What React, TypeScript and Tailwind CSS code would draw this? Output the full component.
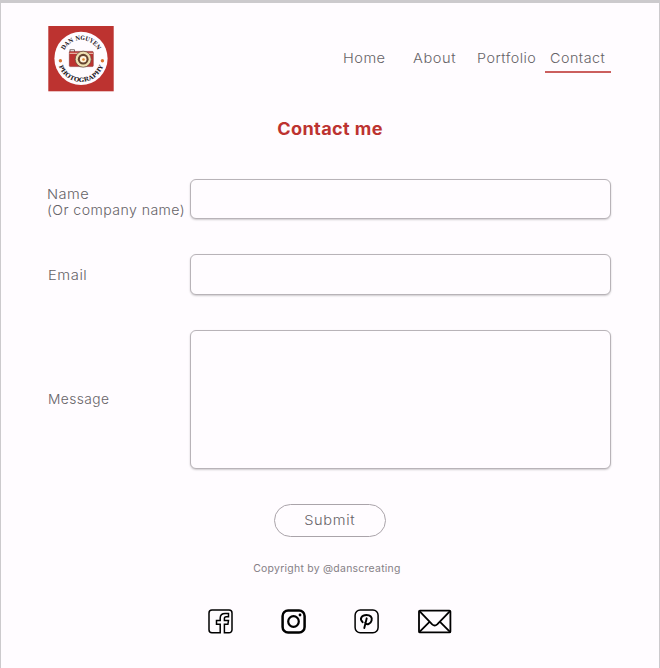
import type { ReactNode } from "react";

const navItems = [
  { label: "Home", box: "w-[56px] pl-[7px]", text: "scale-x-[1.075] tracking-[0.42px]" },
  { label: "About", box: "ml-[14px] w-[64px] pl-[7px]", text: "scale-x-[1.075] tracking-[0.55px]" },
  { label: "Portfolio", box: "w-[75px] pl-[7px]", text: "scale-x-[1.055] tracking-[0.45px]" },
  { label: "Contact", box: "w-[66px] pl-[5px] border-b-2 border-[#cb5f5e]", text: "scale-x-[1.055] tracking-[0.45px]" },
];

function Logo() {
  return (
    <svg className="block h-[66px] w-[66px]" viewBox="0 0 66 66" role="img">
      <defs>
        <path id="arc-top" d="M14.4 32.5 A18.6 18.6 0 0 1 51.6 32.5" />
        <path id="arc-bottom" d="M9.6 32.5 A23.4 23.4 0 0 0 56.4 32.5" />
      </defs>
      <rect x="0.3" y="0" width="65.4" height="65.3" fill="#bd3330" />
      <circle cx="33" cy="32.4" r="26.6" fill="#fffcff" />
      <g fill="#25201f" fontFamily="'DejaVu Serif', serif" fontWeight="700" fontSize="5.9">
        <text textAnchor="middle">
          <textPath href="#arc-top" startOffset="50%" textLength="41" lengthAdjust="spacingAndGlyphs">DAN NGUYEN</textPath>
        </text>
        <text textAnchor="middle">
          <textPath href="#arc-bottom" startOffset="50%" textLength="58" lengthAdjust="spacingAndGlyphs">PHOTOGRAPHY</textPath>
        </text>
      </g>
      <circle cx="12.4" cy="34.7" r="1.7" fill="#d9742f" />
      <circle cx="54.4" cy="34.7" r="1.7" fill="#d9742f" />
      <rect x="22" y="23.8" width="4.6" height="3" fill="#fff" stroke="#44302d" strokeWidth="0.7" />
      <rect x="21.3" y="25.4" width="24" height="15.2" rx="1" fill="#bd3330" stroke="#7d2a28" strokeWidth="0.5" />
      <path d="M21.5 27.3H45" stroke="#efcfbc" strokeWidth="1" />
      <circle cx="35.2" cy="33.2" r="8" fill="#eee0b1" stroke="#5d4939" strokeWidth="0.7" />
      <circle cx="35.2" cy="33.2" r="5.4" fill="#65442f" />
      <circle cx="35.2" cy="33.2" r="3.3" fill="#fff4dc" />
      <circle cx="35.5" cy="33.5" r="1.3" fill="#df882c" />
    </svg>
  );
}

function Field({ label, className, control }: { label: ReactNode; className: string; control: ReactNode }) {
  return (
    <label className={"flex items-center " + className}>
      <span className="shrink-0 whitespace-nowrap text-[13.6px] leading-4">{label}</span>
      {control}
    </label>
  );
}

const control =
  "block w-[421px] shrink-0 resize-none rounded-md border border-[#b8b3b8] bg-[#fffcff] px-3 shadow-[0_1px_2px_rgba(0,0,0,0.2)] outline-none";

export default function App() {
  return (
    <main className="h-[668px] w-[660px] overflow-hidden border-x border-t-[3px] border-[#cccacd] bg-[#fffcff] font-['Inter',sans-serif] font-light text-[#666367]">
      <header className="flex h-[89px] items-start justify-between pl-[47px] pr-[48px] pt-[23px]">
        <Logo />
        <nav className="mt-[17px] flex text-[13.6px] leading-[30px]">
          {navItems.map((item) => (
            <a key={item.label} className={"block h-[30px] whitespace-nowrap " + item.box}>
              <span className={"block origin-left " + item.text}>{item.label}</span>
            </a>
          ))}
        </nav>
      </header>

      <h1 className="mt-[27px] scale-x-[1.065] text-center text-[17px] font-bold leading-5 tracking-[0.35px] text-[#bd3330]">
        Contact me
      </h1>

      <form className="mt-[40px]">
        <Field
          className="pl-[46px]"
          label={
            <span className="mt-[6px] block w-[143px]">
              <span className="block origin-left scale-x-[1.075] tracking-[0.4px]">Name</span>
              <span className="block origin-left scale-x-[1.04] tracking-[0.4px]">(Or company name)</span>
            </span>
          }
          control={<input className={control + " h-[40px]"} />}
        />
        <Field
          className="mt-[35px] pl-[47px]"
          label={
            <span className="block w-[142px]">
              <span className="block origin-left scale-x-[1.085] tracking-[0.5px]">Email</span>
            </span>
          }
          control={<input className={control + " h-[41px]"} />}
        />
        <Field
          className="mt-[35px] pl-[47px]"
          label={
            <span className="mb-[2px] block w-[142px]">
              <span className="block origin-left scale-x-[1.015] tracking-[0.4px]">Message</span>
            </span>
          }
          control={<textarea className={control + " h-[139px]"} />}
        />
        <button
          type="button"
          className="mx-auto mt-[35px] block h-[33px] w-[112px] rounded-full border border-[#aaa4aa] text-[13.6px] tracking-[0.6px]"
        >
          <span className="inline-block scale-x-[1.075]">Submit</span>
        </button>
      </form>

      <footer>
        <p className="mr-[7px] mt-[23px] text-center text-[10.2px] font-normal leading-4 tracking-[0.25px] text-[#858086]">
          <span className="inline-block scale-x-[1.025]">Copyright by @danscreating</span>
        </p>
        <div className="mt-[32px] flex items-center pl-[206px] text-black">
          <svg className="h-[27px] w-[27px]" viewBox="0 0 27 27" fill="none" stroke="currentColor" strokeWidth="1.5">
            <path d="M13.2 24.8H5a3 3 0 0 1-3-3V5a3 3 0 0 1 3-3h17a3 3 0 0 1 3 3v16.8a3 3 0 0 1-3 3h-4.6v-8.5h3.5l.6-3.7h-4.1v-2.1c0-1.2.5-1.8 1.8-1.8h2.3V5.4h-3.4c-3.2 0-4.9 1.8-4.9 4.5v2.7H9.5v3.7h3.7z" />
          </svg>
          <svg className="ml-[46px] h-[27px] w-[27px]" viewBox="0 0 27 27" fill="none" stroke="currentColor">
            <rect x="2.6" y="2.4" width="22" height="22" rx="5.5" strokeWidth="2.5" />
            <circle cx="13.5" cy="13.5" r="5.3" strokeWidth="2.2" />
            <circle cx="20" cy="7" r="1.4" fill="currentColor" stroke="none" />
          </svg>
          <svg className="ml-[46px] h-[27px] w-[27px]" viewBox="0 0 27 27" fill="none" stroke="currentColor">
            <rect x="2.1" y="2" width="23" height="22.8" rx="5.2" strokeWidth="1.5" />
            <path d="M9.7 14.2C5.8 10.6 9 7 13.4 7c4 0 6 2.2 5.2 5.5-.8 3.4-5 5.2-6.4 2.1M13.7 10.3 11.3 20" strokeWidth="1.9" strokeLinecap="round" />
          </svg>
          <svg className="ml-[37px] h-[27px] w-[35px]" viewBox="0 0 35 27" fill="none" stroke="currentColor" strokeWidth="1.8" strokeLinejoin="round">
            <rect x="2" y="2.6" width="31.4" height="21.8" rx="1" />
            <path d="m2.5 3.2 12.7 13.2q2.5 2.3 5 0L33 3.2M2.5 23.8l10-10M33 23.8l-10-10" />
          </svg>
        </div>
      </footer>
    </main>
  );
}
